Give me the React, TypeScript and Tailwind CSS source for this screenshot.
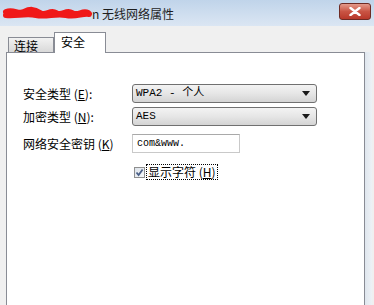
import React from "react";

const cjk = { fontFamily: '"Noto Sans CJK SC", "Liberation Sans", sans-serif' };
const mono = { fontFamily: '"Liberation Mono", "Noto Sans CJK SC", monospace' };

function Scribble() {
  return (
    <svg width="90" height="14" viewBox="0 0 90 14" className="shrink-0">
      <path
        d="M4 6 C12 3 16 9 22 6 S32 3 38 7 S48 3 54 7 S64 3 70 7 S80 4 86 7 M4 9 C14 10 24 7 34 9 S54 7 64 9 S80 7 87 8"
        stroke="#f01818"
        strokeWidth="6"
        fill="none"
        strokeLinecap="round"
      />
    </svg>
  );
}

function Combo({ text }: { text: string }) {
  return (
    <div className="h-[19px] w-[185px] rounded-[3px] border border-[#707070] bg-gradient-to-b from-[#f3f3f3] via-[#e6e6e6] to-[#d4d4d4] flex items-center pl-[3px] pr-[6px]">
      <span className="text-[11px] text-black leading-none" style={mono}>
        {text}
      </span>
      <svg width="8" height="5" viewBox="0 0 8 5" className="ml-auto">
        <path d="M0 0 H8 L4 5 Z" fill="#1a1a1a" />
      </svg>
    </div>
  );
}

export default function App() {
  return (
    <div className="w-[374px] h-[305px] overflow-hidden bg-[#f0f0f0] flex flex-col" style={cjk}>
      {/* Title bar */}
      <div className="h-[26px] shrink-0 bg-gradient-to-b from-[#c0d4ea] to-[#dbe6f3] flex items-center pl-[2px] pr-[3px]">
        <Scribble />
        <span className="text-[12px] text-[#1e1e1e] mt-[2px]">n 无线网络属性</span>
        <div className="ml-auto mb-[4px] w-[32px] h-[17px] rounded-[3px] border border-[#6e2b24] bg-gradient-to-b from-[#e39a8b] via-[#c95444] to-[#b8382a] flex items-center justify-center">
          <svg width="12" height="9" viewBox="0 0 12 9">
            <path d="M1.5 1 L10.5 8 M10.5 1 L1.5 8" stroke="#fff" strokeWidth="2.4" strokeLinecap="round" />
          </svg>
        </div>
      </div>

      {/* Tabs */}
      <div className="h-[26px] shrink-0 flex items-end pl-[8px]">
        <div className="h-[15px] w-[46px] border border-[#898c95] border-b-0 bg-gradient-to-b from-[#f2f2f2] to-[#d9d9d9] text-[12px] leading-[15px] pl-[5px] text-black">
          连接
        </div>
        <div className="relative z-10 -mb-px h-[21px] w-[52px] border border-[#898c95] border-b-0 bg-white text-[12px] leading-[18px] pl-[6px] text-black">
          安全
        </div>
      </div>

      {/* Panel */}
      <div className="flex-1 flex pl-[6px] pr-[2px]">
        <div className="w-[359px] border border-b-0 border-[#898c95] bg-white pt-[31px] pl-[16px]">
          <div className="grid grid-cols-[109px_185px] items-center text-[12px] text-black">
            <span>
              安全类型 (<span className="underline">E</span>):
            </span>
            <Combo text="WPA2 - 个人" />
            <span className="mt-[4px]">
              加密类型 (<span className="underline">N</span>):
            </span>
            <div className="mt-[4px]">
              <Combo text="AES" />
            </div>
            <span className="mt-[8px]">
              网络安全密钥 (<span className="underline">K</span>)
            </span>
            <div className="mt-[8px] h-[19px] w-[108px] border border-[#c9c9c9] border-t-[#a9a9a9] flex items-center pl-[4px]">
              <span className="text-[10px] text-black leading-none" style={mono}>
                com&amp;www.
              </span>
            </div>
            <span />
            <div className="mt-[11px] flex items-center">
              <div className="ml-[2px] w-[11px] h-[11px] border border-[#8f8f8f] bg-gradient-to-br from-[#dde3ea] to-[#f6f8fa] flex items-center justify-center">
                <svg width="9" height="9" viewBox="0 0 9 9">
                  <path d="M1.5 4.5 L3.6 7 L7.6 1.5" stroke="#4a5f87" strokeWidth="1.8" fill="none" />
                </svg>
              </div>
              <span className="ml-[1px] px-[1px] border border-dotted border-black leading-[14px]">
                显示字符 (<span className="underline">H</span>)
              </span>
            </div>
          </div>
        </div>
        <div className="ml-auto w-[7px] bg-gradient-to-r from-[#dfe6ee] to-[#eef2f6]" />
      </div>
    </div>
  );
}
